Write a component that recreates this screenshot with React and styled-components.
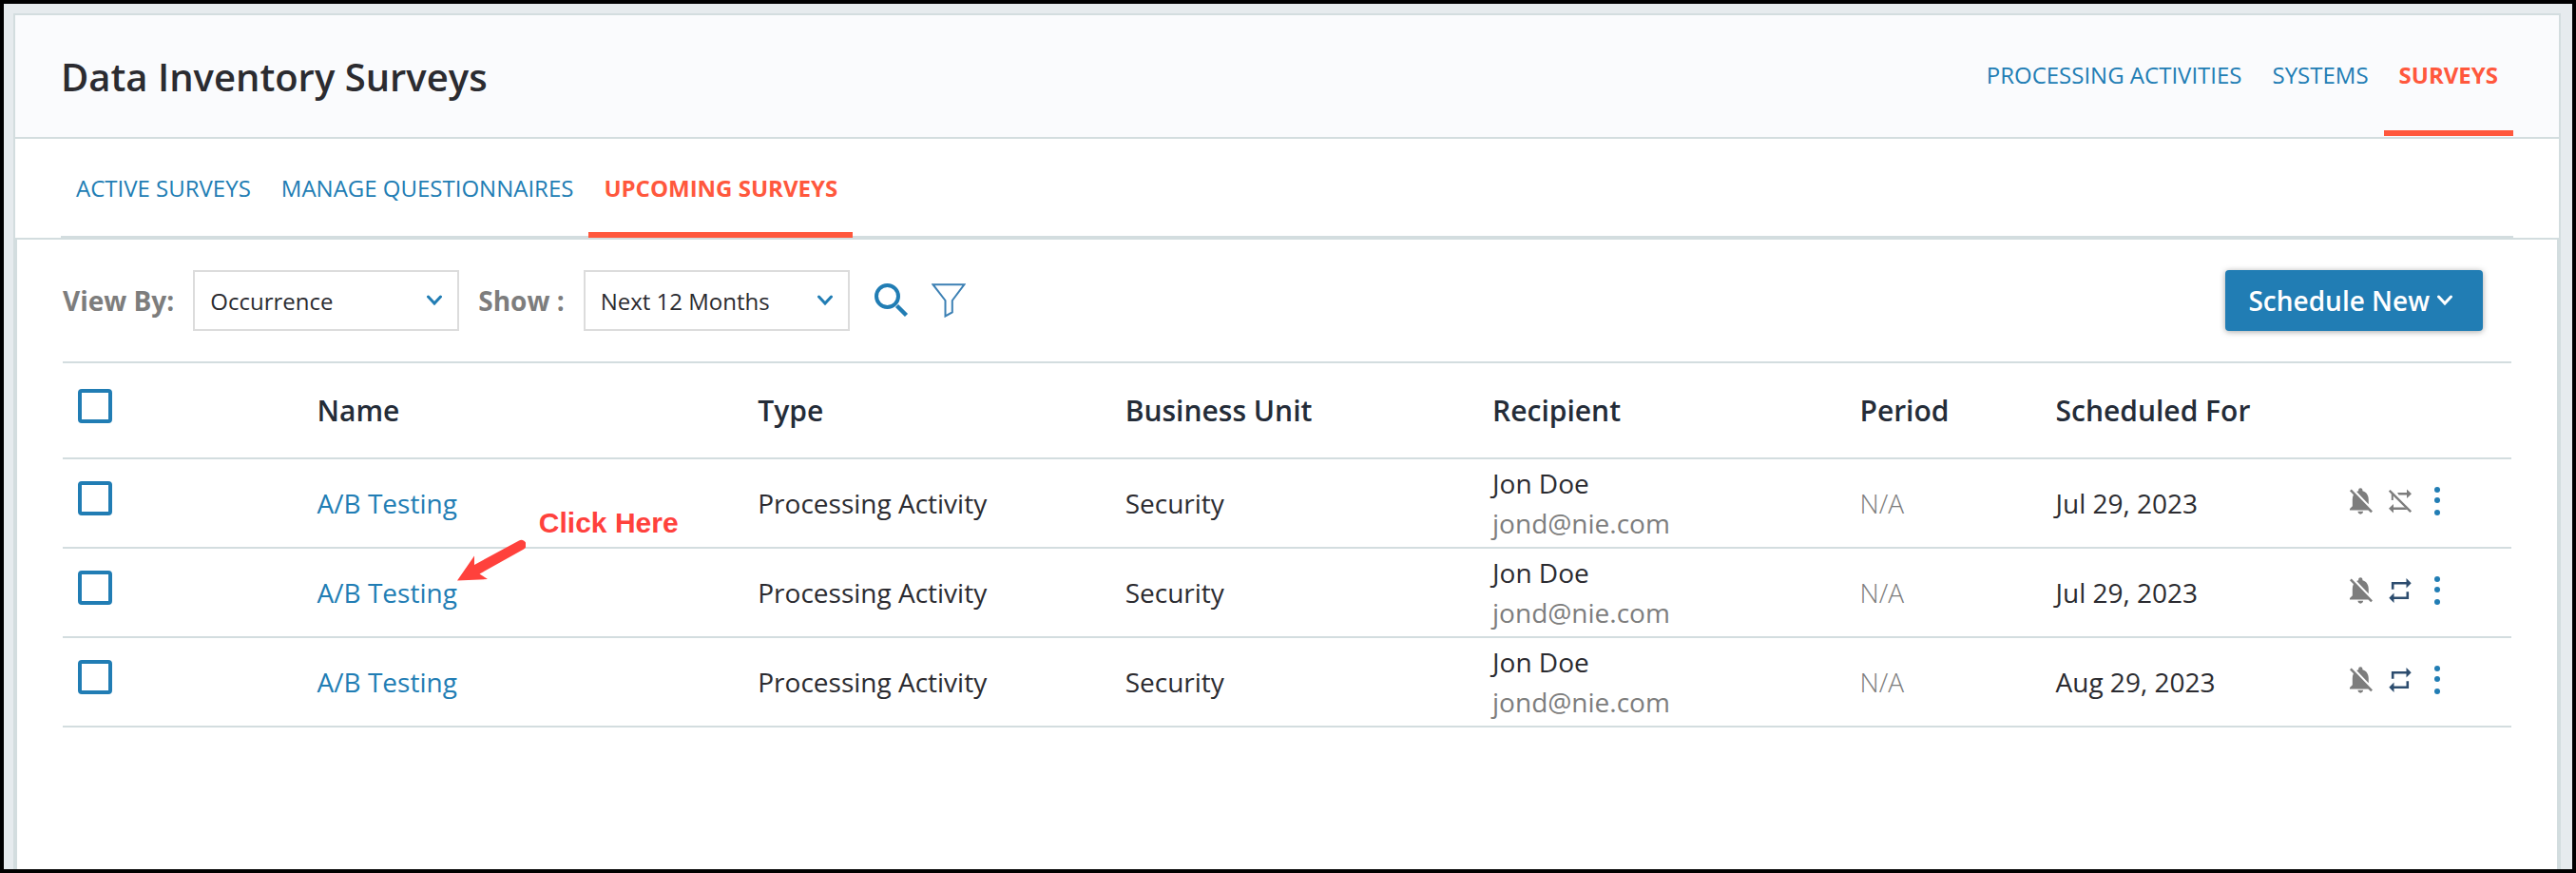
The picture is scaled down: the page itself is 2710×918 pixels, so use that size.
import React, { useState } from 'react'
import styled, { createGlobalStyle, css } from 'styled-components'

const GlobalStyle = createGlobalStyle`
*{
  box-sizing: border-box;
}
body{
  margin: 0;
  font-family: 'Open Sans', 'Noto Sans', sans-serif;
  font-size: 28px;
  color: #2b2b30;
}
`

const Page = styled.div`
min-height: 100vh;
display: flex;
flex-direction: column;
padding: 10px 12px 0 10px;
border: 4px solid #000;
background: #e6ebee;
`

const Card = styled.main`
flex: 1;
display: flex;
flex-direction: column;
border: 2px solid #d3dddf;
border-bottom: none;
background: #fff;
`

const Header = styled.header`
display: flex;
justify-content: space-between;
align-items: center;
height: 130px;
padding: 0 48px;
border-bottom: 2px solid #d3dddf;
background: #fafbfd;
`

const Title = styled.h1`
margin: 0;
font-size: 40px;
font-weight: 600;
`

const Nav = styled.nav`
display: flex;
height: 127px;
align-self: flex-start;
`

const TabBar = styled.nav`
display: flex;
height: 104px;
margin: 0 48px;
box-shadow: inset 0 -2px #d3dddf;
`

const TabLink = styled.a`
display: flex;
align-items: center;
padding: 0 16px;
border-top: 4px solid transparent;
border-bottom: 6px solid ${props => props.$active ? '#ff583d' : 'transparent'};
color: ${props => props.$active ? '#ff583d' : '#217db4'};
font-size: 24px;
font-weight: ${props => props.$active ? 700 : 400};
text-decoration: none;
white-space: nowrap;
`

const Panel = styled.section`
flex: 1;
padding: 0 48px;
border: 2px solid #d3dddf;
border-bottom: none;
`

const Toolbar = styled.div`
display: flex;
align-items: center;
gap: 20px;
padding: 32px 30px 32px 0;
`

const Label = styled.label`
color: #7d7d7d;
font-weight: 700;
white-space: nowrap;
`

const SelectBox = styled.div`
position: relative;
width: 280px;

svg{
  position: absolute;
  right: 16px;
  top: 26px;
  pointer-events: none;
}
`

const Select = styled.select`
appearance: none;
width: 100%;
height: 64px;
padding: 0 40px 0 16px;
border: 2px solid #dcdcdc;
border-radius: 0;
background: #fff;
color: #2b2b30;
font-family: inherit;
font-size: 24px;
text-rendering: optimizeLegibility;
`

const Tools = styled.div`
display: flex;
gap: 24px;
margin-left: 6px;
`

const IconButton = styled.button`
display: flex;
padding: 0;
border: none;
background: transparent;
color: #217db4;
cursor: pointer;
`

const ScheduleButton = styled.button`
display: flex;
align-items: center;
gap: 6px;
height: 64px;
margin-left: auto;
padding: 0 30px 0 24px;
border: none;
border-radius: 4px;
background: #217db4;
box-shadow: 0 1px 6px rgba(0,0,0,0.35);
color: #fff;
font-family: inherit;
font-size: 28px;
font-weight: 600;
white-space: nowrap;
cursor: pointer;
`

const Table = styled.table`
width: 100%;
table-layout: fixed;
border-collapse: separate;
border-spacing: 0;
`

const cell = css`
padding: 4px 10px;
border-bottom: 2px solid #d3dddf;
line-height: 42px;
text-align: left;
vertical-align: middle;
`

const Th = styled.th`
${cell}
width: ${props => props.$width};
height: 103px;
border-top: 2px solid #d3dddf;
color: #242c38;
font-size: 30px;
font-weight: 600;
`

const Td = styled.td`
${cell}
height: 94px;
`

const CheckWrap = styled.div`
display: flex;
padding: 0 6px 10px;
`

const Checkbox = styled.input`
appearance: none;
width: 36px;
height: 36px;
margin: 0;
border: 4px solid #217db4;
border-radius: 4px;
background: #fff;
cursor: pointer;

&:checked{
  box-shadow: inset 0 0 0 4px #fff;
  background: #217db4;
}
`

const NameWrap = styled.div`
position: relative;
display: inline-block;
`

const NameLink = styled.a`
color: #217db4;
text-decoration: none;
`

const Muted = styled.div`
color: #7d7d7d;
`

const NotSet = styled.span`
color: #7d7d7d;
font-weight: 300;
`

const Actions = styled.div`
display: flex;
align-items: center;
gap: 17px;
padding-bottom: 4px;
`

const ActionIcon = styled(IconButton)`
color: ${props => props.$color};
`

const MenuButton = styled(IconButton)`
padding: 0 7px;
`

// Sits on top of the rows, pointing at the link it hangs from
const Callout = styled.div`
position: absolute;
left: 100%;
bottom: 32px;
display: flex;
align-items: flex-end;
gap: 14px;
z-index: 1;
`

const CalloutText = styled.strong`
padding-bottom: 44px;
color: #ff413c;
font-family: 'Liberation Sans', Arial, sans-serif;
font-size: 30px;
line-height: 36px;
white-space: nowrap;
`

const Chevron = ({ color }) => (
  <svg width="20" height="12" viewBox="0 0 20 12" fill="none" stroke={color} strokeWidth="3">
    <path d="M3.500 2l6.500 7 6.500-7" strokeLinecap="round" />
  </svg>
)

const SearchIcon = () => (
  <svg width="36" height="36" viewBox="0 0 36 36" fill="none" stroke="currentColor">
    <circle cx="13.5" cy="13.5" r="11.5" strokeWidth="4" />
    <path d="M23.500 23.500l10 10" strokeWidth="4.400" />
  </svg>
)

const FilterIcon = () => (
  <svg width="36" height="36" viewBox="0 0 36 36" fill="none" stroke="#3c80b4" strokeWidth="2">
    <path d="M1.5 1.2h33L21.8 18v12.5L14.5 34.5V18z" />
  </svg>
)

const BellOffIcon = () => (
  <svg width="24" height="28" viewBox="4 2.4 17 19.8" fill="currentColor">
    <path d="M20 18.69L7.84 6.14 5.27 3.49 4 4.76l2.8 2.8v.01c-.52.99-.8 2.16-.8 3.42v5l-2 2v1h13.73l2 2L21 19.72l-1-1.03zM12 22c1.11 0 2-.89 2-2h-4c0 1.11.89 2 2 2zm6-7.32V11c0-3.08-1.64-5.64-4.5-6.32V4c0-.83-.67-1.5-1.5-1.5s-1.5.67-1.5 1.5v.68c-.24.05-.5.13-.72.23-.24.09-.47.2-.69.32L18 14.68z" />
  </svg>
)

const RepeatIcon = () => (
  <svg width="24" height="26" viewBox="3 2 18 20" fill="currentColor">
    <path d="M7 7h10v3l4-4-4-4v3H5v6h2V7zm10 10H7v-3l-4 4 4 4v-3h12v-6h-2v4z" />
  </svg>
)

const RepeatOffIcon = () => (
  <svg width="24" height="26" viewBox="0 0 24 26" fill="currentColor">
    <path d="M9 4h10V0.5l5 4.7-5 4.7V6.4H10.6zM2.8 5l2 2v5h-2zM5 19.5h12l2.4 2.4H5v3.6L0 20.7l5-4.8z" />
    <path d="M0.8 1.8l22.4 22.4" fill="none" stroke="currentColor" strokeWidth="2.4" />
  </svg>
)

const DotsIcon = () => (
  <svg width="6" height="30" viewBox="0 0 6 30" fill="currentColor">
    <circle cx="3" cy="3" r="3" />
    <circle cx="3" cy="14" r="3" />
    <circle cx="3" cy="27" r="3" />
  </svg>
)

const ArrowIcon = () => (
  <svg width="72" height="46" viewBox="0 0 72 46" fill="#ff413c">
    <path d="M0 44.500L18 18.500V28L65 2.500a5 5 0 0 1 5 9L23.500 37.500 32 43z" />
  </svg>
)

const sections = ['PROCESSING ACTIVITIES', 'SYSTEMS', 'SURVEYS']
const tabs = ['ACTIVE SURVEYS', 'MANAGE QUESTIONNAIRES', 'UPCOMING SURVEYS']

const columns = [
  { name: 'Name', width: '18%' },
  { name: 'Type', width: '15%' },
  { name: 'Business Unit', width: '15%' },
  { name: 'Recipient', width: '15%' },
  { name: 'Period', width: '8%' },
  { name: 'Scheduled For', width: '12%' },
]

const surveys = [
  { id: 1, date: 'Jul 29, 2023', repeats: false },
  { id: 2, date: 'Jul 29, 2023', repeats: true, callout: 'Click Here' },
  { id: 3, date: 'Aug 29, 2023', repeats: true },
]

const App = () => {
  const [section, setSection] = useState('SURVEYS')
  const [tab, setTab] = useState('UPCOMING SURVEYS')
  const [selected, setSelected] = useState([])

  const toggle = id =>
    setSelected(selected.includes(id) ? selected.filter(s => s !== id) : [...selected, id])
  const toggleAll = () =>
    setSelected(selected.length === surveys.length ? [] : surveys.map(s => s.id))

  return (
    <Page>
      <GlobalStyle />
      <Card>
        <Header>
          <Title>Data Inventory Surveys</Title>
          <Nav>
            {sections.map(s => (
              <TabLink key={s} href="#" $active={s === section} onClick={() => setSection(s)}>{s}</TabLink>
            ))}
          </Nav>
        </Header>
        <TabBar>
          {tabs.map(t => (
            <TabLink key={t} href="#" $active={t === tab} onClick={() => setTab(t)}>{t}</TabLink>
          ))}
        </TabBar>
        <Panel>
          <Toolbar>
            <Label htmlFor="view-by">View By:</Label>
            <SelectBox>
              <Select id="view-by">
                <option>Occurrence</option>
              </Select>
              <Chevron color="#217db4" />
            </SelectBox>
            <Label htmlFor="show">Show :</Label>
            <SelectBox>
              <Select id="show">
                <option>Next 12 Months</option>
              </Select>
              <Chevron color="#217db4" />
            </SelectBox>
            <Tools>
              <IconButton aria-label="Search"><SearchIcon /></IconButton>
              <IconButton aria-label="Filter"><FilterIcon /></IconButton>
            </Tools>
            <ScheduleButton>
              Schedule New
              <Chevron color="#fff" />
            </ScheduleButton>
          </Toolbar>
          <Table>
            <thead>
              <tr>
                <Th $width="10%">
                  <CheckWrap>
                    <Checkbox
                      type="checkbox"
                      aria-label="Select all"
                      checked={selected.length === surveys.length}
                      onChange={toggleAll}
                    />
                  </CheckWrap>
                </Th>
                {columns.map(c => <Th key={c.name} $width={c.width}>{c.name}</Th>)}
                <Th $width="7%" aria-label="Actions" />
              </tr>
            </thead>
            <tbody>
              {surveys.map(s => (
                <tr key={s.id}>
                  <Td>
                    <CheckWrap>
                      <Checkbox
                        type="checkbox"
                        aria-label="Select A/B Testing"
                        checked={selected.includes(s.id)}
                        onChange={() => toggle(s.id)}
                      />
                    </CheckWrap>
                  </Td>
                  <Td>
                    <NameWrap>
                      <NameLink href="#">A/B Testing</NameLink>
                      {s.callout ? (
                        <Callout>
                          <ArrowIcon />
                          <CalloutText>{s.callout}</CalloutText>
                        </Callout>
                      ) : null}
                    </NameWrap>
                  </Td>
                  <Td>Processing Activity</Td>
                  <Td>Security</Td>
                  <Td>
                    <div>Jon Doe</div>
                    <Muted>jond@nie.com</Muted>
                  </Td>
                  <Td><NotSet>N/A</NotSet></Td>
                  <Td>{s.date}</Td>
                  <Td>
                    <Actions>
                      <ActionIcon $color="#7d7d7d" aria-label="Notifications off"><BellOffIcon /></ActionIcon>
                      {s.repeats
                        ? <ActionIcon $color="#2c4c6e" aria-label="Repeats"><RepeatIcon /></ActionIcon>
                        : <ActionIcon $color="#7d7d7d" aria-label="Does not repeat"><RepeatOffIcon /></ActionIcon>}
                      <MenuButton aria-label="More"><DotsIcon /></MenuButton>
                    </Actions>
                  </Td>
                </tr>
              ))}
            </tbody>
          </Table>
        </Panel>
      </Card>
    </Page>
  )
}

export default App
